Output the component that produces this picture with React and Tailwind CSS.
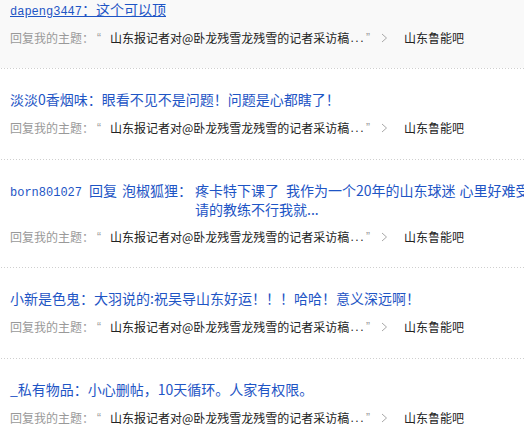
import React from "react";

const Sep = () => (
  <div className="h-px w-full bg-[linear-gradient(to_right,#cfcfcf_1px,transparent_1px)] bg-[length:3px_1px] bg-[position:1px_0]" />
);

const Chevron = () => (
  <svg width="7" height="10" viewBox="0 0 7 10" className="block">
    <polyline points="1,1 5.5,5 1,9" fill="none" stroke="#a8a8a8" strokeWidth="1" />
  </svg>
);

const ReplyLine = ({ mt = "mt-[10px]" }) => (
  <div className={`${mt} flex h-[18px] items-center whitespace-nowrap text-[12px] leading-[18px]`}>
    <span className="text-[#999]">回复我的主题：</span>
    <span className="inline-block w-[16px] pl-[3px] font-['Liberation_Sans',sans-serif] text-[#999]">“</span>
    <span className="inline-flex w-[248px] items-center text-[#222]">
      <span>山东报记者对@卧龙残雪龙残雪的记者采访稿</span>
      <span className="ml-[1px] font-['Liberation_Sans',sans-serif] tracking-[1.6px]">...</span>
    </span>
    <span className="ml-[8px] font-['Liberation_Sans',sans-serif] text-[#999]">”</span>
    <span className="ml-[11px]">
      <Chevron />
    </span>
    <span className="ml-[16px] text-[#222]">山东鲁能吧</span>
  </div>
);

const Title = ({ children, underline }) => (
  <div className={`h-[19px] whitespace-nowrap text-[14px] leading-[19px] text-[#1e55c5] ${underline ? "underline" : ""}`}>
    {children}
  </div>
);

const Mono = ({ children }) => (
  <span className="font-['Liberation_Mono',monospace] text-[12px] leading-[10px]">{children}</span>
);

export default function App() {
  return (
    <div className="h-[446px] w-[524px] overflow-hidden bg-white font-['Noto_Sans_CJK_SC',sans-serif]">
      <div className="bg-[#f9f9f9] pb-[21px] pl-[10px]">
        <Title underline>
          <Mono>dapeng3447</Mono>：这个可以顶
        </Title>
        <ReplyLine />
      </div>
      <Sep />

      <div className="pb-[22px] pl-[10px] pt-[21px]">
        <Title>淡淡0香烟味：眼看不见不是问题！问题是心都瞎了！</Title>
        <ReplyLine />
      </div>
      <Sep />

      <div className="pb-[21px] pl-[10px] pt-[21px]">
        <div className="flex items-baseline whitespace-nowrap text-[14px] leading-[19px] text-[#1e55c5]">
          <Mono>born801027</Mono>
          <span className="ml-[7px]">回复</span>
          <span className="ml-[5px]">泡椒狐狸：</span>
          <div className="ml-[3px] flex flex-col">
            <span>
              疼卡特下课了<span className="inline-block w-[7px]" />我作为一个20年的山东球迷<span className="inline-block w-[4px]" />心里好难受
            </span>
            <span>请的教练不行我就...</span>
          </div>
        </div>
        <ReplyLine mt="mt-[9px]" />
      </div>
      <Sep />

      <div className="pb-[22px] pl-[10px] pt-[21px]">
        <Title>小新是色鬼：大羽说的:祝吴导山东好运！！！哈哈！意义深远啊！</Title>
        <ReplyLine />
      </div>
      <Sep />

      <div className="pb-[22px] pl-[10px] pt-[21px]">
        <Title>_私有物品：小心删帖，10天循环。人家有权限。</Title>
        <ReplyLine />
      </div>
      <Sep />
    </div>
  );
}
